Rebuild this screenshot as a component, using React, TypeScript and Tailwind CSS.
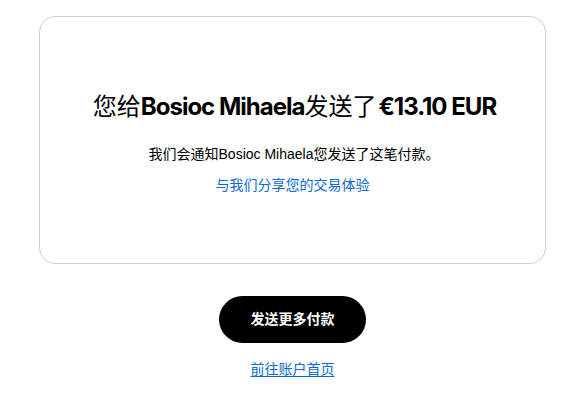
export default function App() {
  const cjk = '"Liberation Sans", "Noto Sans CJK SC", sans-serif';
  const big = 'Inter, "Noto Sans CJK SC", sans-serif';
  return (
    <div className="min-h-[409px] bg-white pt-4" style={{ fontFamily: cjk }}>
      <div className="ml-[39px] w-[507px]">
        <div className="flex h-[248px] flex-col items-center rounded-[16px] border border-[#cfcfcf] pt-[73px]">
          <h1 className="flex items-baseline pl-[4px] text-[24px] leading-[34px] text-black">
            <span className="font-normal">您给</span>
            <span className="font-bold tracking-[-1px]" style={{ fontFamily: big }}>
              Bosioc Mihaela
            </span>
            <span className="font-normal">发送了</span>
            <span className="ml-[2px] font-bold tracking-[-1px]" style={{ fontFamily: big }}>
              €13.10 EUR
            </span>
          </h1>
          <p className="mt-[20px] pl-[3px] text-[14px] leading-[20px] text-black">我们会通知Bosioc Mihaela您发送了这笔付款。</p>
          <a href="#" className="mt-[11px] text-[14px] leading-[20px] text-[#0a6ad6]">
            与我们分享您的交易体验
          </a>
        </div>
        <div className="mt-[32px] flex flex-col items-center">
          <button className="h-[47px] w-[147px] rounded-full bg-black text-[14px] font-bold text-white">
            发送更多付款
          </button>
          <a href="#" className="mt-[16px] text-[14px] leading-[20px] text-[#0a6ad6] underline underline-offset-2">
            前往账户首页
          </a>
        </div>
      </div>
    </div>
  );
}
